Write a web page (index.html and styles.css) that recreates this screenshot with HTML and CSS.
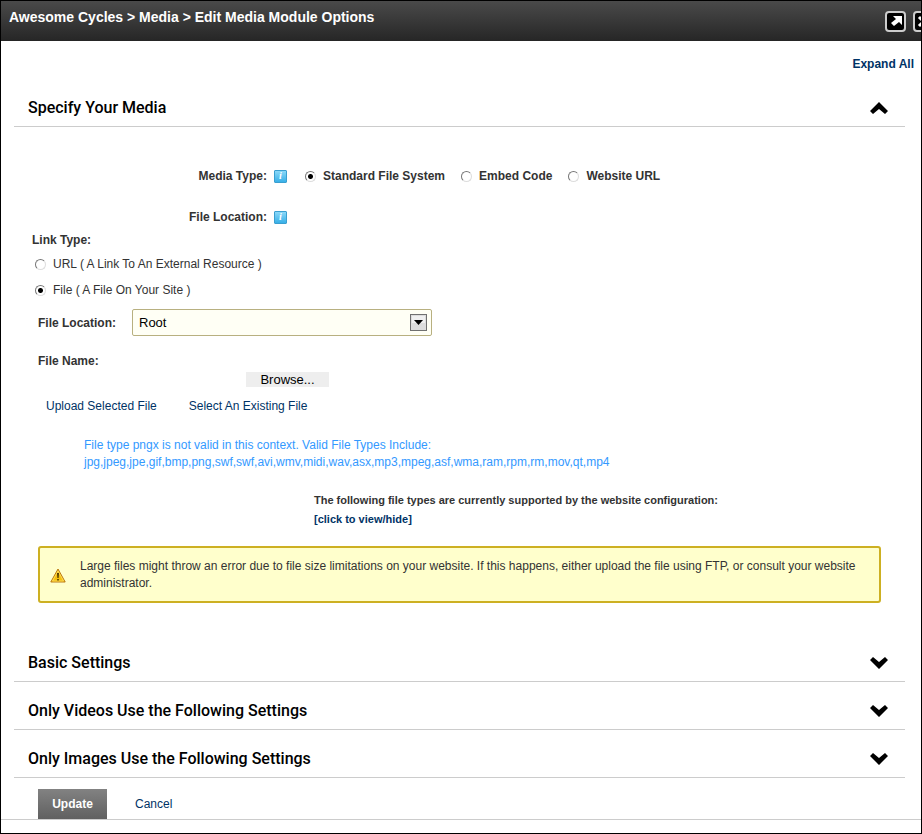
FILE: index.html
```html
<!DOCTYPE html>
<html lang="en">
<head>
<meta charset="utf-8">
<title>Edit Media Module Options</title>
<link rel="stylesheet" href="styles.css">
</head>
<body>
<svg class="sprite" aria-hidden="true">
  <symbol id="chevron" viewBox="0 0 18 12"><path d="M0 9 9 0 18 9 15 12 9 7 3 12Z"/></symbol>
</svg>
<div class="dialog">
  <header class="titlebar">
    <h1 class="title">Awesome Cycles &gt; Media &gt; Edit Media Module Options</h1>
    <div class="window-tools">
      <button class="tool" type="button" aria-label="Maximize">
        <svg viewBox="0 0 17 17"><path d="M6 3h9v9l-3-3-5 4-3-3 5-4z" fill="#fff"/></svg>
      </button>
      <button class="tool" type="button" aria-label="Close">
        <svg viewBox="0 0 17 17"><path d="M4 4l9 9M13 4l-9 9" stroke="#fff" stroke-width="3"/></svg>
      </button>
    </div>
  </header>

  <main class="content">
    <div class="expand"><a href="#">Expand All</a></div>

    <h2 class="section"><button class="section-toggle" type="button" aria-expanded="true">Specify Your Media<svg class="chevron"><use href="#chevron"/></svg></button></h2>
    <form class="panel">
      <div class="row" role="radiogroup" aria-labelledby="media-type">
        <span class="row-label" id="media-type">Media Type:</span>
        <button class="help" type="button">i</button>
        <div class="choices">
          <label class="choice"><input class="radio" type="radio" name="media" checked>Standard File System</label>
          <label class="choice"><input class="radio" type="radio" name="media">Embed Code</label>
          <label class="choice"><input class="radio" type="radio" name="media">Website URL</label>
        </div>
      </div>
      <div class="row">
        <span class="row-label">File Location:</span>
        <button class="help" type="button">i</button>
      </div>

      <fieldset class="link-type">
        <legend class="legend">Link Type:</legend>
        <label class="link-choice"><input class="radio" type="radio" name="link">URL ( A Link To An External Resource )</label>
        <label class="link-choice"><input class="radio" type="radio" name="link" checked>File ( A File On Your Site )</label>
      </fieldset>

      <div class="folder">
        <label class="folder-label" for="folder">File Location:</label>
        <span class="select-box">
          <select class="select" id="folder"><option>Root</option></select>
          <svg class="select-arrow" viewBox="0 0 17 17"><rect x=".5" y=".5" width="16" height="16" fill="#ddd" stroke="#707070"/><path d="M2 2h13v7H2z" fill="#f0f0f0"/><path d="M4 6h9l-4.500 5z"/></svg>
        </span>
      </div>
      <label class="file-label" for="browse">File Name:</label>
      <button class="browse" id="browse" type="button">Browse...</button>
      <div class="file-links">
        <a href="#">Upload Selected File</a>
        <a href="#">Select An Existing File</a>
      </div>

      <p class="invalid">File type pngx is not valid in this context. Valid File Types Include:<br>jpg,jpeg,jpe,gif,bmp,png,swf,swf,avi,wmv,midi,wav,asx,mp3,mpeg,asf,wma,ram,rpm,rm,mov,qt,mp4</p>
      <p class="supported">The following file types are currently supported by the website configuration:<br><a href="#">[click to view/hide]</a></p>

      <div class="warning">
        <svg class="warning-icon" viewBox="0 0 16 15"><path d="M8 1 15.200 14H.8Z" fill="#fc1" stroke="#b87818" stroke-linejoin="round"/><path d="M8 3 13.500 13H2.500Z" fill="#f4c010" stroke="#ffe680" stroke-width=".6"/><path d="M7 5h2l-.4 5H7.400zM7.200 11h1.600v1.500H7.200z" fill="#503800"/></svg>
        <p class="warning-text">Large files might throw an error due to file size limitations on your website. If this happens, either upload the file using FTP, or consult your website administrator.</p>
      </div>
    </form>

    <h2 class="section"><button class="section-toggle" type="button" aria-expanded="false">Basic Settings<svg class="chevron"><use href="#chevron"/></svg></button></h2>
    <h2 class="section"><button class="section-toggle" type="button" aria-expanded="false">Only Videos Use the Following Settings<svg class="chevron"><use href="#chevron"/></svg></button></h2>
    <h2 class="section"><button class="section-toggle" type="button" aria-expanded="false">Only Images Use the Following Settings<svg class="chevron"><use href="#chevron"/></svg></button></h2>
  </main>

  <footer class="actions">
    <button class="update" type="submit">Update</button>
    <a href="#">Cancel</a>
  </footer>
</div>
</body>
</html>
```
FILE: styles.css
```css
* { box-sizing: border-box; }
body { margin: 0; background: #fff; color: #333; font: 12px/18px "Liberation Sans", Arial, sans-serif; }
h1, h2, p { margin: 0; }
button { font: inherit; border: 0; padding: 0; cursor: pointer; }
a { color: #003366; text-decoration: none; }
.sprite { display: none; }
.dialog { min-height: 100vh; border: 1px solid #000; overflow: hidden; }

.titlebar { display: flex; justify-content: space-between; height: 40px; padding: 7px 0 0 8px; background: linear-gradient(#4a4a4a, #262626); }
.title { color: #fff; font-size: 14px; line-height: 18px; }
.window-tools { display: flex; gap: 7px; margin: 3px -13px 0 0; }
.tool { display: flex; width: 21px; height: 21px; border: 2px solid #ccc; border-radius: 4px; background: #000; }
.tool svg { width: 17px; height: 17px; }

.content { padding: 14px 16px 0 13px; }
.expand { margin-right: -9px; margin-bottom: 6px; text-align: right; font-weight: bold; }

.section { border-bottom: 1px solid #ccc; }
.section-toggle { display: flex; align-items: center; justify-content: space-between; width: 100%; padding: 11px 17px 0 14px; background: none; color: #000; font: 500 16px/36px Roboto, sans-serif; text-align: left; }
.chevron { width: 18px; height: 12px; }
.section-toggle[aria-expanded="false"] .chevron { transform: rotate(180deg); }

.panel { padding: 40px 24px 31px; }
.row { display: flex; align-items: center; height: 18px; margin-bottom: 23px; font-weight: bold; }
.row-label { width: 229px; text-align: right; }
.help { width: 13px; height: 13px; margin-left: 7px; border: 1px solid #3a9fd0; border-radius: 1px; background: linear-gradient(#8ad8f8, #38b0e8); color: #fff; font: italic bold 10px/10px "Liberation Serif", serif; }
.choices { display: flex; gap: 16px; margin-left: 18px; }
.choice, .link-choice { display: flex; align-items: center; gap: 7px; }
.radio { appearance: none; width: 11px; height: 11px; margin: 0; border: 1px solid; border-color: #777 #ddd #ddd #777; border-radius: 50%; background: #fff; }
.radio:checked { background: radial-gradient(circle, #000 2px, #fff 3px); }

.link-type { margin: -18px 0 6px -6px; padding: 0; border: 0; }
.legend { padding: 0; margin-bottom: 2px; font-weight: bold; }
.link-choice { height: 26px; padding-left: 3px; }

.folder { display: flex; align-items: center; margin-bottom: 16px; }
.folder-label { width: 94px; font-weight: bold; }
.select-box { position: relative; width: 300px; }
.select { display: block; appearance: none; width: 100%; height: 27px; padding: 0 6px; border: 1px solid #b8b080; border-radius: 2px; background: #fffff5; color: #000; font: 13px/18px "Liberation Sans", Arial, sans-serif; }
.select-arrow { position: absolute; top: 5px; right: 5px; width: 17px; height: 17px; pointer-events: none; }
.file-label { display: block; margin-bottom: 2px; font-weight: bold; }
.browse { display: block; width: 83px; margin: 0 0 10px 208px; background: #eee; color: #000; font-size: 13px; line-height: 15px; }
.file-links { display: flex; gap: 32px; padding-left: 8px; }

.invalid { margin: 22px 0 20px 46px; color: #3399ff; line-height: 17px; }
.supported { margin: 0 0 17px 276px; font-size: 11px; line-height: 19px; font-weight: bold; }
.warning { display: flex; align-items: center; gap: 14px; padding: 10px 20px 9px 10px; border: 2px solid #cdb022; border-radius: 3px; background: #ffffcc; }
.warning-icon { flex: none; width: 16px; height: 15px; }
.warning-text { line-height: 17px; }

.actions { display: flex; align-items: center; gap: 28px; margin-top: 11px; padding-left: 37px; border-bottom: 1px solid #ccc; }
.update { width: 69px; height: 30px; background: linear-gradient(#828282, #606060); color: #fff; font-weight: bold; }
```
